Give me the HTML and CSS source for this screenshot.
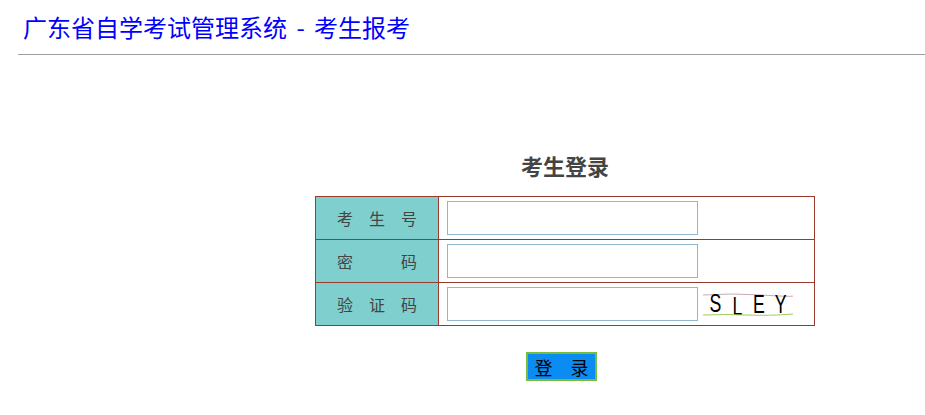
FILE: index.html
```html
<!DOCTYPE html>
<html lang="zh-CN">
  <head>
    <meta charset="UTF-8" />
    <title>广东省自学考试管理系统 - 考生报考</title>
    <link rel="stylesheet" href="styles.css">
  </head>
  <body>
    <div class="header">广东省自学考试管理系统 - 考生报考</div>

    <div class="login-box">
      <h1 class="login-title">考生登录</h1>
      <form id="loginForm" onsubmit="event.preventDefault();">
        <table class="login-table">
          <tr>
            <td class="label">考　生　号</td>
            <td class="field"><div class="field-row"><input type="text" class="text-input" /></div></td>
          </tr>
          <tr>
            <td class="label">密　　　码</td>
            <td class="field"><div class="field-row"><input type="password" class="text-input" /></div></td>
          </tr>
          <tr>
            <td class="label">验　证　码</td>
            <td class="field">
              <div class="field-row">
                <input type="text" class="text-input" />
                <!-- captcha picture -->
                <svg class="captcha" width="92" height="30" viewBox="0 0 92 30">
                  <path d="M1 6 Q30 4 60 6 T91 7" stroke="#c9a9b5" stroke-width="1" fill="none" />
                  <g font-family="Liberation Sans, sans-serif" font-size="26" fill="#000">
                    <text x="11" y="23" transform="scale(0.68 1)">S</text>
                    <text x="45" y="26" transform="scale(0.68 1)">L</text>
                    <text x="75" y="24" transform="scale(0.68 1)">E</text>
                    <text x="107" y="24" transform="scale(0.68 1)">Y</text>
                  </g>
                  <path d="M1 26 Q25 25 45 26 T91 25" stroke="#9fce5a" stroke-width="1" fill="none" />
                </svg>
              </div>
            </td>
          </tr>
        </table>

        <div class="actions">
          <button type="submit" class="login-btn">登　录</button>
        </div>
      </form>
    </div>
  </body>
</html>
```

FILE: styles.css
```css
body {
  font-family: "Noto Sans CJK SC", "Liberation Sans", sans-serif;
  margin: 0;
  padding-top: 8px;
  background-color: #fff;
}

.header {
  margin-left: 18px;
  padding: 0 0 8px 5px;
  font-size: 24px;
  line-height: 38px;
  word-spacing: 4px;
  color: #0000ff;
  border-bottom: 1px solid #9e9e9e;
}

.login-box {
  width: 500px;
  margin-left: 315px;
  margin-top: 95px;
}

.login-title {
  margin: 0 0 16px 0;
  font-size: 22px;
  line-height: 30px;
  font-weight: bold;
  color: #444;
  text-align: center;
}

.login-table {
  width: 500px;
  border-collapse: collapse;
}

.login-table td {
  border: 1px solid #9a3a2c;
  vertical-align: middle;
}

td.label {
  width: 122px;
  padding: 0;
  background-color: #7ecfcd;
  color: #444;
  font-size: 16px;
  text-align: center;
}

td.field {
  padding: 4px 8px;
}

.field-row {
  display: flex;
  align-items: center;
  gap: 4px;
  height: 34px;
}

.text-input {
  box-sizing: border-box;
  width: 251px;
  height: 34px;
  margin: 0;
  padding: 2px 4px;
  border: 1px solid #8eb6cf;
  font-size: 16px;
}

.captcha {
  display: block;
  overflow: visible;
}

.actions {
  margin-top: 26px;
  padding-right: 7px;
  text-align: center;
}

.login-btn {
  box-sizing: border-box;
  width: 71px;
  height: 29px;
  padding: 0;
  border: 2px solid #76bd3c;
  background-color: #0a8cf2;
  color: #000;
  font-family: "Noto Sans CJK SC", sans-serif;
  font-size: 18px;
  line-height: 24px;
  cursor: pointer;
}
```
